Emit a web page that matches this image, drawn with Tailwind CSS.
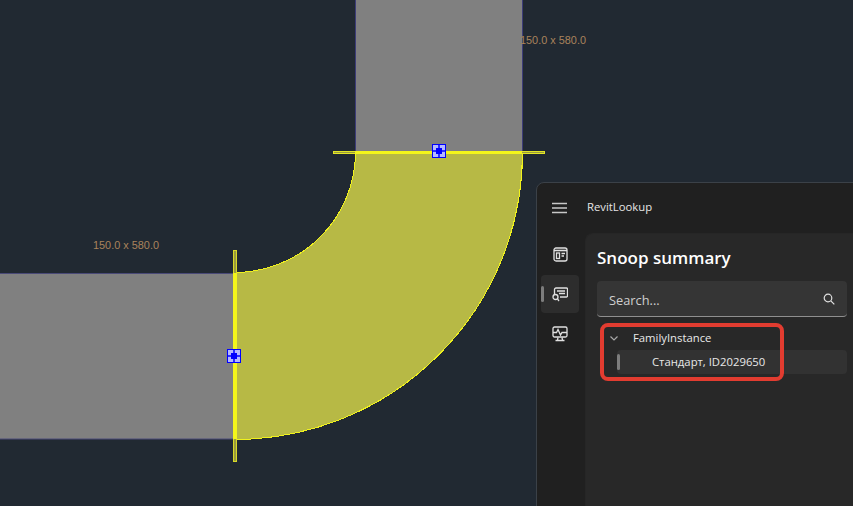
<!DOCTYPE html>
<html lang="en">
<head>
    <meta charset="UTF-8">
    <title>RevitLookup</title>
    <script src="https://cdn.jsdelivr.net/npm/@tailwindcss/browser@4"></script>
</head>
<body class="bg-[#212932] w-[853px] h-[506px] overflow-hidden relative font-['Open_Sans',sans-serif]">
    <!-- Drawing canvas -->
    <svg class="absolute left-0 top-0" width="853" height="506" viewBox="0 0 853 506">
        <rect x="355.500" y="-2" width="167" height="154" fill="#808080" stroke="#3c3c78" stroke-width="1"/>
        <rect x="-2" y="273.500" width="236" height="165.500" fill="#808080" stroke="#4a4a78" stroke-width="1"/>
        <path shape-rendering="crispEdges" d="M355.500 152.500 H522.500 A288 287 0 0 1 234.500 439.500 V272.500 A121 120.500 0 0 0 355.500 152.500 Z" fill="#b7b945" stroke="#f0f21c" stroke-width="1"/>
        <rect x="333.500" y="151.500" width="211" height="2" fill="#9a9b3c" stroke="#e4e624" stroke-width="1"/>
        <rect x="355" y="151" width="167" height="3" fill="#f4f61a"/>
        <rect x="233.500" y="250.500" width="3" height="211" fill="#9a9b3c" stroke="#d8da28" stroke-width="1"/>
        <rect x="233" y="273" width="4" height="166" fill="#f4f61a"/>
        <g>
            <rect x="432.500" y="144.500" width="13" height="13" fill="#b4b8ff" stroke="#0000ff" stroke-width="1"/>
            <path d="M439 145v12M433 151h12" stroke="#0000ff" stroke-width="1.500"/>
            <rect x="436" y="148" width="6" height="6" fill="#0000ff"/>
        </g>
        <g>
            <rect x="227.500" y="349.500" width="13" height="13" fill="#b4b8ff" stroke="#0000ff" stroke-width="1"/>
            <path d="M234 350v12M228 356h12" stroke="#0000ff" stroke-width="1.500"/>
            <rect x="231" y="353" width="6" height="6" fill="#0000ff"/>
        </g>
    </svg>
    <span class="absolute left-[520px] top-[34px] text-[10.900px] leading-[13px] text-[#a9835c] font-['Liberation_Sans',sans-serif]">150.0 x 580.0</span>
    <span class="absolute left-[93px] top-[239px] text-[10.900px] leading-[13px] text-[#a9835c] font-['Liberation_Sans',sans-serif]">150.0 x 580.0</span>

    <!-- RevitLookup window -->
    <div class="absolute left-[536px] top-[182px] w-[330px] h-[340px] bg-[#202020] rounded-tl-[8px] border border-[#3b4148] flex flex-col">
        <div class="h-[50px] shrink-0 flex items-center">
            <svg class="ml-[15px]" width="16" height="12" viewBox="0 0 16 12"><path d="M0 1.500h15M0 6h15M0 10.500h15" stroke="#c8c8c8" stroke-width="1.300"/></svg>
            <span class="ml-[19px] pb-[2px] text-[11.300px] text-[#e6e6e6]">RevitLookup</span>
        </div>
        <div class="flex flex-1">
            <!-- Sidebar -->
            <div class="w-[48px] shrink-0 flex flex-col items-center pr-[2px]">
                <div class="h-[38px] w-[38px] mt-[2px] flex items-center justify-center">
                    <svg width="15" height="15" viewBox="0 0 15 15" fill="none" stroke="#e0e0e0" stroke-width="1.300"><rect x="1" y="1" width="13" height="13" rx="2"/><path d="M1 3.500h13" stroke-width="1.600"/><rect x="3.500" y="6" width="3" height="5.500"/><path d="M8.500 6.500h3.500M8.500 9h2.500"/></svg>
                </div>
                <div class="relative h-[38px] w-[38px] mt-[2px] bg-[#2d2d2d] rounded-[4px] flex items-center justify-center">
                    <span class="absolute left-0 top-[11px] w-[3px] h-[16px] rounded-full bg-[#7d7d7d]"></span>
                    <svg width="16" height="15" viewBox="0 0 16 15" fill="none" stroke="#e0e0e0" stroke-width="1.300"><path d="M2.500 8V2.500a1.500 1.500 0 0 1 1.500-1.500h10.500a1 1 0 0 1 1 1v7a1 1 0 0 1-1 1H8"/><path d="M5 4h8M7 6.500h6"/><circle cx="3.500" cy="10" r="2.500"/><path d="M5.500 12l1.500 2"/></svg>
                </div>
                <div class="h-[38px] w-[38px] mt-[2px] flex items-center justify-center">
                    <svg width="16" height="16" viewBox="0 0 16 16" fill="none" stroke="#e0e0e0" stroke-width="1.300"><rect x="1" y="1" width="14" height="10" rx="1.500"/><path d="M1 6.500h3.500l1.500-3 2.500 5.500 1.500-2.500h5M6 11.500l-.5 2.500M10 11.500l.5 2.500M3.500 14.500h9" /></svg>
                </div>
            </div>
            <!-- Content panel -->
            <div class="flex-1 bg-[#282828] rounded-tl-[8px] pl-[11px] pt-[12px] border-l border-t border-[#262626]">
                <h1 class="text-[17px] leading-[24px] font-semibold text-white">Snoop summary</h1>
                <div class="mt-[11px] w-[250px] h-[36px] bg-[#353535] rounded-[4px] border-b border-[#8f8f8f] flex items-center justify-between pl-[12px] pr-[12px]">
                    <span class="pt-[4px] text-[12.800px] text-[#cfcfcf]">Search...</span>
                    <svg width="12" height="12" viewBox="0 0 12 12" fill="none" stroke="#e0e0e0" stroke-width="1.200"><circle cx="5" cy="5" r="3.800"/><path d="M7.800 7.800l3.500 3.500"/></svg>
                </div>
                <div class="mt-[9px] w-[250px]">
                    <div class="h-[24px] flex items-center">
                        <svg class="ml-[13px]" width="8" height="5" viewBox="0 0 8 5" fill="none" stroke="#a8a8a8" stroke-width="1.200"><path d="M.5.500l3.500 3.500 3.500-3.500"/></svg>
                        <span class="ml-[15px] pt-[1px] text-[11.300px] text-[#e8e8e8]">FamilyInstance</span>
                    </div>
                    <div class="relative ml-[20px] h-[24px] bg-[#323232] rounded-[4px] flex items-center pl-[35px]">
                        <span class="absolute left-0 top-[4px] w-[3px] h-[16px] rounded-full bg-[#7d7d7d]"></span>
                        <span class="text-[11.300px] text-[#e8e8e8]">Стандарт, ID2029650</span>
                    </div>
                </div>
            </div>
        </div>
    </div>

    <!-- Red annotation box -->
    <div class="absolute left-[600px] top-[323px] w-[184px] h-[58px] rounded-[8px] border-[4px] border-[#e23c30]"></div>
</body>
</html>
